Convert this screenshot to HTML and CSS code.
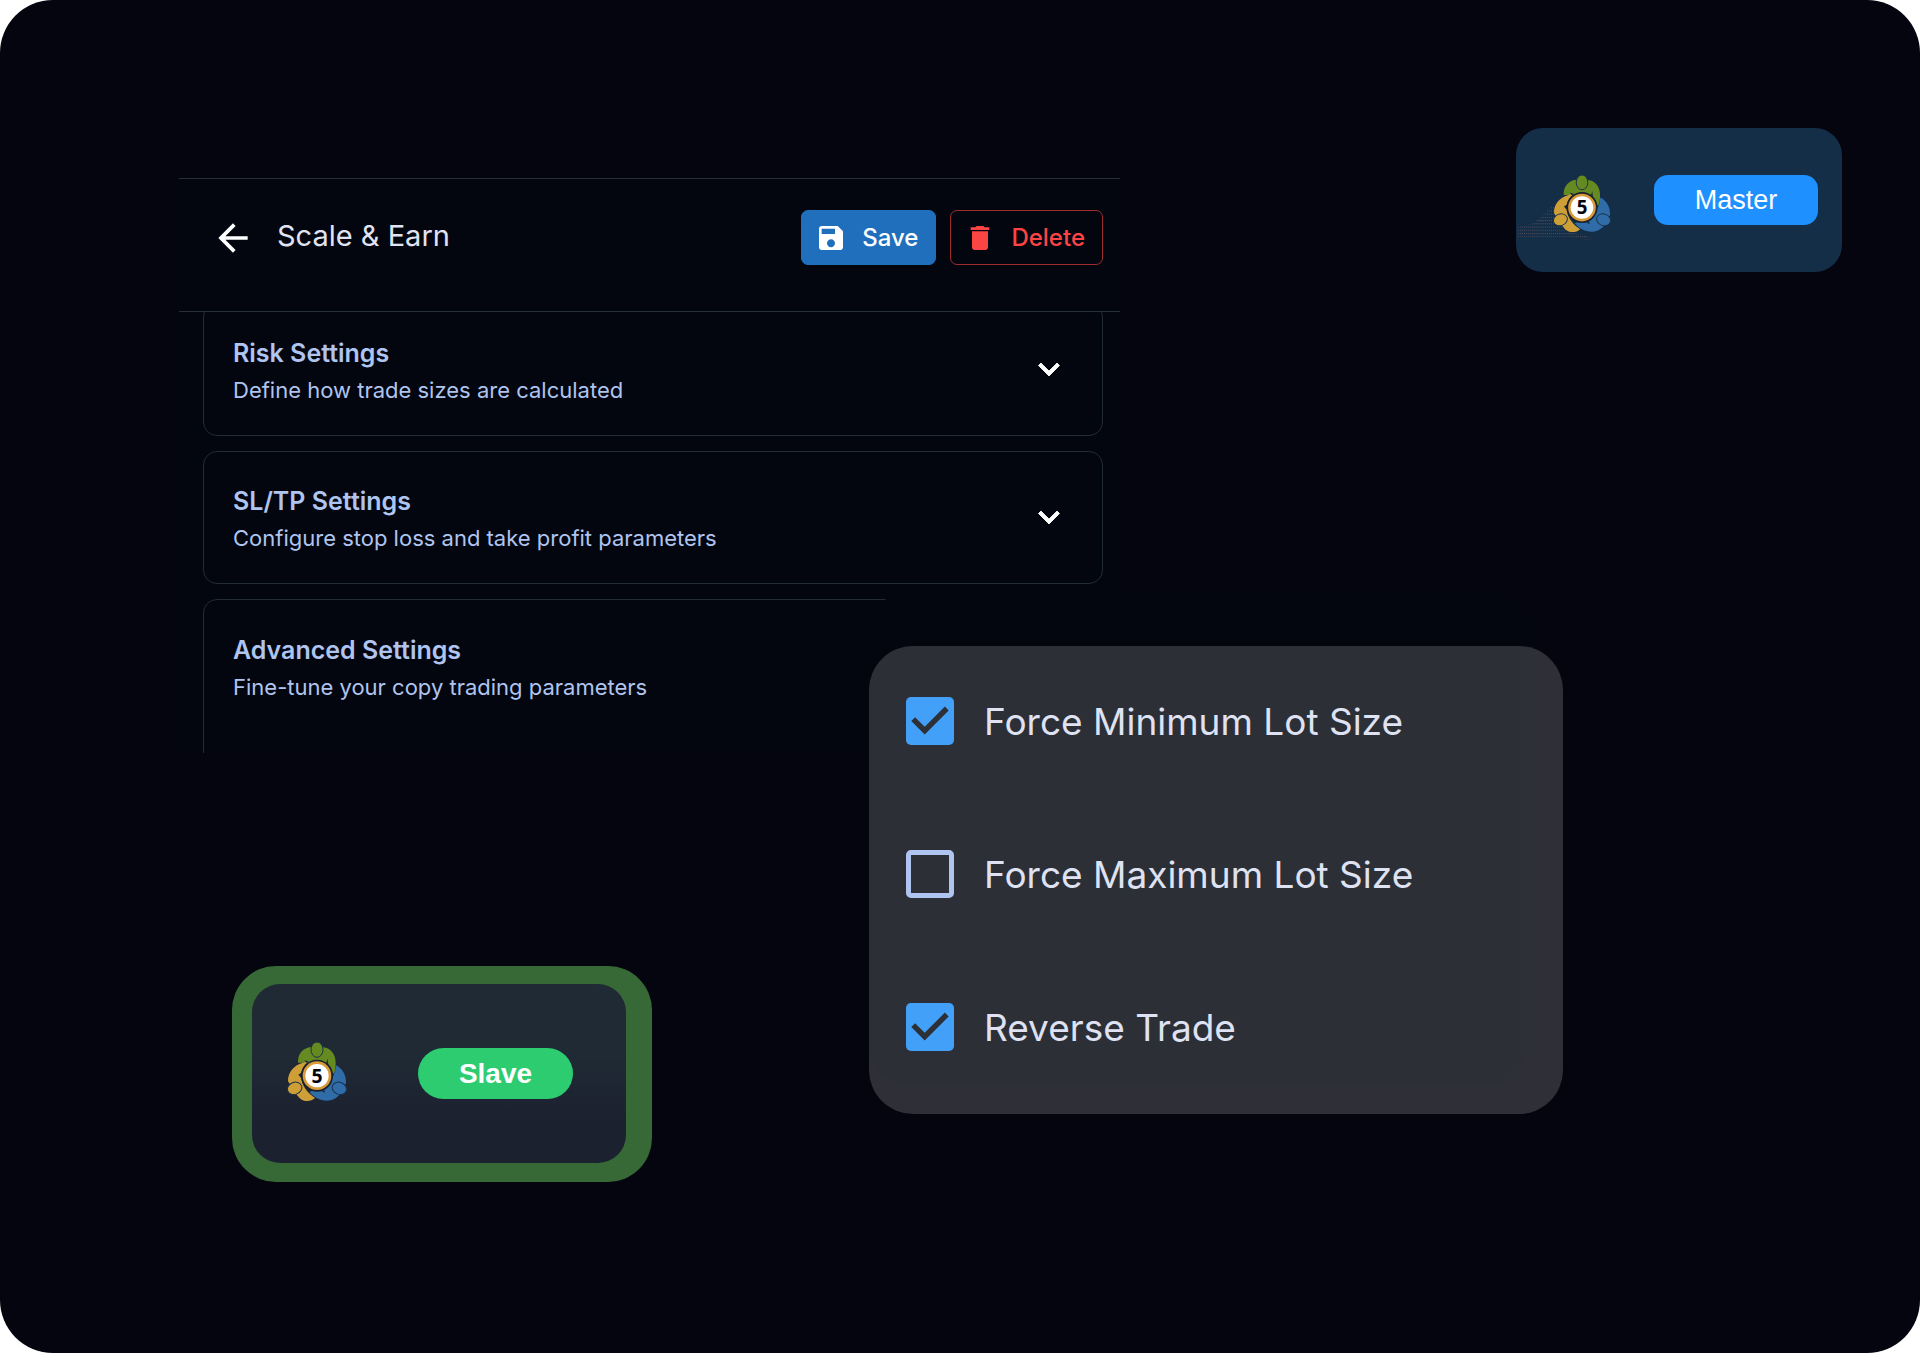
FILE: index.html
```html
<!DOCTYPE html>
<html lang="en">
<head>
  <meta charset="utf-8">
  <meta name="viewport" content="width=device-width, initial-scale=1">
  <title>Scale &amp; Earn</title>
  <link rel="stylesheet" href="styles.css">
</head>
<body>
  <svg class="defs" width="0" height="0" aria-hidden="true">
    <defs>
      <pattern id="dots" width="6" height="10" patternUnits="userSpaceOnUse">
        <rect width="3" height="3" fill="#565058"/>
      </pattern>
      <symbol id="chevron" viewBox="0 0 24 24">
        <path stroke="currentColor" stroke-width=".5" d="M16.59 8.59 12 13.17 7.41 8.59 6 10l6 6 6-6z"/>
      </symbol>
      <symbol id="mt5" viewBox="0 0 180 180">
        <g stroke-width="3">
          <path fill="#668a22" d="M33 62C32 34 50 15 76 15H104C130 16 146 36 146 62C146 78 144 88 140 96L118 62H62Z"/>
          <path fill="#2f6ca8" d="M147 70C166 80 178 98 177 124L160 156C146 172 132 176 120 176C98 176 80 166 68 150L110 130C134 122 144 98 147 70Z"/>
          <path fill="#cf9f37" d="M64 59C28 62 2 86 3 118L28 156C38 172 48 177 60 177C70 177 78 174 84 168C66 156 42 134 42 100C42 86 50 70 64 59Z"/>
          <g stroke="#18324a">
            <ellipse fill="#668a22" cx="90" cy="23" rx="18" ry="23"/>
            <ellipse fill="#cf9f37" cx="23" cy="139" rx="22" ry="18" transform="rotate(-22 23 139)"/>
            <ellipse fill="#2f6ca8" cx="157" cy="139" rx="22" ry="18" transform="rotate(22 157 139)"/>
          </g>
          <path fill="#18283a" d="M58 62 52 54 68 60ZM118 62 122 50 124 70ZM34 98 46 90 42 108ZM104 148 114 152 112 144Z"/>
        </g>
        <circle cx="90" cy="101" r="48" fill="#17202e"/>
        <circle cx="90" cy="101" r="43" fill="#d99a38"/>
        <circle cx="90" cy="101" r="35" fill="#fff"/>
        <text class="mt5-digit" x="90" y="122" text-anchor="middle">5</text>
      </symbol>
    </defs>
  </svg>

  <main class="stage">
    <section class="panel" aria-labelledby="panel-title">
      <header class="panel-head">
        <button class="back" type="button" aria-label="Back">
          <svg viewBox="0 0 24 24" aria-hidden="true"><path d="M20 11H7.83l5.59-5.59L12 4l-8 8 8 8 1.41-1.41L7.83 13H20z"/></svg>
        </button>
        <h1 class="panel-title" id="panel-title">Scale &amp; Earn</h1>
        <button class="btn btn-save" type="button">
          <svg viewBox="0 0 24 24" aria-hidden="true"><path d="M17 3H5c-1.11 0-2 .9-2 2v14c0 1.1.89 2 2 2h14c1.1 0 2-.9 2-2V7zm-5 16c-1.66 0-3-1.34-3-3s1.34-3 3-3 3 1.34 3 3-1.34 3-3 3m3-10H5V5h10z"/></svg>
          Save
        </button>
        <button class="btn btn-delete" type="button">
          <svg viewBox="0 0 24 24" aria-hidden="true"><path d="M6 19c0 1.1.9 2 2 2h8c1.1 0 2-.9 2-2V7H6zM19 4h-3.500l-1-1h-5l-1 1H5v2h14z"/></svg>
          Delete
        </button>
      </header>
      <div class="panel-body">
        <article class="setting">
          <div class="setting-text">
            <h2>Risk Settings</h2>
            <p>Define how trade sizes are calculated</p>
          </div>
          <button class="expand" type="button" aria-label="Expand Risk Settings"><svg aria-hidden="true"><use href="#chevron"/></svg></button>
        </article>
        <article class="setting">
          <div class="setting-text">
            <h2>SL/TP Settings</h2>
            <p>Configure stop loss and take profit parameters</p>
          </div>
          <button class="expand" type="button" aria-label="Expand SL/TP Settings"><svg aria-hidden="true"><use href="#chevron"/></svg></button>
        </article>
        <article class="setting setting-open">
          <div class="setting-text">
            <h2>Advanced Settings</h2>
            <p>Fine-tune your copy trading parameters</p>
          </div>
        </article>
      </div>
    </section>

    <section class="account master">
      <svg class="logo" viewBox="0 0 180 180" role="img" aria-label="MetaTrader 5">
        <path fill="url(#dots)" d="M-111 163-60 150-5 100H20L30 170 125 196V200H90L60 192H-111Z"/>
        <use href="#mt5"/>
      </svg>
      <span class="role">Master</span>
    </section>

    <section class="account slave">
      <div class="slave-inner">
        <svg class="logo" viewBox="0 0 180 180" role="img" aria-label="MetaTrader 5"><use href="#mt5"/></svg>
        <span class="role">Slave</span>
      </div>
    </section>

    <form class="options">
      <label class="option"><input type="checkbox" checked> Force Minimum Lot Size</label>
      <label class="option"><input type="checkbox"> Force Maximum Lot Size</label>
      <label class="option"><input type="checkbox" checked> Reverse Trade</label>
    </form>
  </main>
</body>
</html>
```
FILE: styles.css
```css
* {
  box-sizing: border-box;
}

body {
  margin: 0;
  background: #fff;
  font-family: Inter, "Liberation Sans", sans-serif;
}

h1,
h2,
p {
  margin: 0;
}

button {
  font: inherit;
  cursor: pointer;
}

svg {
  display: block;
  fill: currentColor;
}

.defs {
  position: absolute;
}

/* Overlapping cards share one proportional grid */
.stage {
  display: grid;
  grid-template-columns: 179fr 53fr 420fr 217fr 251fr 396fr 47fr 279fr 78fr;
  grid-template-rows: 128px 50px 94px 374px 107px 213px 148px 68px;
  min-height: 100vh;
  align-content: start;
  border-radius: 53px;
  background: #05050f;
}

/* Settings panel */
.panel {
  grid-area: 3 / 2 / 6 / 6;
  display: flex;
  flex-direction: column;
  overflow: hidden;
  background: #03060f;
  color: #afc4ef;
}

.panel-head {
  display: flex;
  align-items: center;
  height: 134px;
  flex: none;
  padding: 0 17px 15px 32px;
  border-top: 1px solid #262e39;
  border-bottom: 1px solid #262e39;
}

.back {
  padding: 0;
  border: 0;
  background: none;
  color: #fff;
}

.back svg {
  width: 44px;
  height: 44px;
}

.panel-title {
  flex: 1;
  padding: 0 0 4px 22px;
  font-size: 29px;
  line-height: 36px;
  font-weight: 400;
  color: #e0e3f2;
}

.btn {
  display: flex;
  align-items: center;
  gap: 15px;
  height: 55px;
  padding: 0 17px 0 13px;
  border: 1px solid #1f6fbd;
  border-radius: 7px;
  font-size: 24px;
  font-weight: 500;
}

.btn svg {
  width: 32px;
  height: 32px;
}

.btn-save {
  background: #1f6fbd;
  color: #fff;
}

.btn-delete {
  margin-left: 14px;
  border-color: #a02c30;
  background: none;
  color: #fb4545;
}

.panel-body {
  display: flex;
  flex-direction: column;
  flex: 1;
  gap: 15px;
  min-height: 0;
  overflow: hidden;
  padding: 0 17px 0 24px;
}

.setting {
  display: flex;
  flex: none;
  align-items: center;
  justify-content: space-between;
  height: 133px;
  padding: 5px 32px 0 29px;
  border: 1px solid #232b36;
  border-radius: 14px;
}

.setting:first-child {
  margin-top: -9px;
}

.setting-open {
  height: 200px;
  align-items: flex-start;
  padding-top: 32px;
}

.setting h2 {
  font-size: 25px;
  line-height: 37px;
  font-weight: 600;
}

.setting p {
  font-size: 22px;
  line-height: 37px;
}

.expand {
  padding: 0 0 6px;
  border: 0;
  background: none;
  color: #fff;
}

.expand svg {
  width: 42px;
  height: 42px;
}

/* Account badges */
.account {
  display: flex;
  align-items: center;
}

.logo {
  flex: none;
  overflow: visible;
}

.mt5-digit {
  font: 700 58px "Noto Sans", sans-serif;
  fill: #05060c;
}

.role {
  display: flex;
  align-items: center;
  justify-content: center;
  font-family: "Liberation Sans", Arial, sans-serif;
  color: #fff;
}

.master {
  grid-area: 2 / 7 / 4 / 9;
  justify-content: space-between;
  padding: 0 24px 0 37px;
  border-radius: 27px;
  background: #142e48;
}

.master .logo {
  width: 58px;
  height: 58px;
  margin-top: 8px;
}

.master .role {
  width: 164px;
  height: 50px;
  border-radius: 14px;
  background: #1e90ff;
  font-size: 27px;
}

.slave {
  grid-area: 7 / 3 / 9 / 4;
  align-items: stretch;
  padding: 18px 26px 19px 20px;
  border-radius: 44px;
  background: #376937;
}

.slave-inner {
  display: flex;
  flex: 1;
  align-items: center;
  justify-content: space-between;
  padding: 0 53px 0 35px;
  border-radius: 28px;
  background: linear-gradient(#1f2a34 40%, #1c2130 75%);
}

.slave .logo {
  width: 60px;
  height: 60px;
  margin-bottom: 4px;
}

.slave .role {
  width: 155px;
  height: 51px;
  border-radius: 26px;
  background: #2ecc71;
  font-size: 28px;
  font-weight: 700;
}

/* Copy options */
.options {
  grid-area: 5 / 5 / 8 / 8;
  position: relative;
  z-index: 1;
  display: flex;
  flex-direction: column;
  gap: 105px;
  padding: 51px 37px;
}

/* Dark sheet, then the translucent card over it */
.options::before,
.options::after {
  content: "";
  position: absolute;
}

.options::before {
  z-index: -2;
  inset: -54px 36px 29px 0;
  border-radius: 40px;
  background: #03060f;
}

.options::after {
  z-index: -1;
  inset: 0;
  border-radius: 44px;
  background: rgba(255, 255, 255, 0.17);
}

.option {
  display: flex;
  align-items: center;
  gap: 30px;
  height: 48px;
  font-size: 37px;
  color: #dfe2f2;
}

.option input {
  appearance: none;
  width: 48px;
  height: 48px;
  margin: 0;
  border: 5px solid #afc4ef;
  border-radius: 5px;
}

.option input:checked {
  border: 0;
  background: #42a0f8;
}

.option input:checked::before {
  content: "";
  display: block;
  height: 100%;
  background: #2d3037;
  clip-path: polygon(39% 78%, 11% 50%, 19% 42%, 39% 62%, 81% 20%, 89% 28%);
}
```
